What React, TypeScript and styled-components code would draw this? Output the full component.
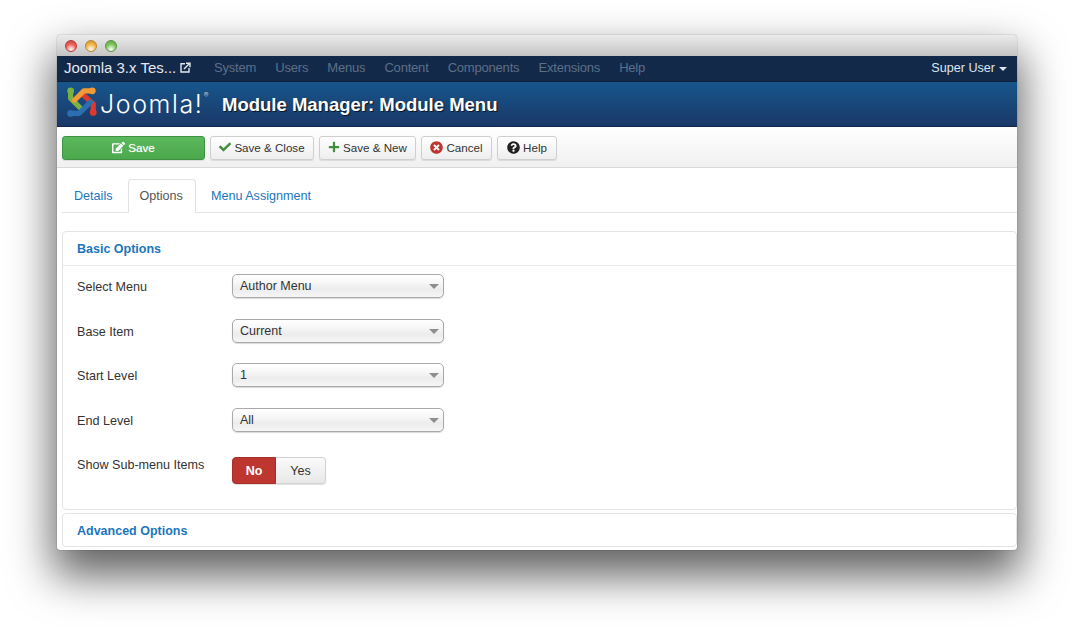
import React from 'react';
import styled, { createGlobalStyle } from 'styled-components';
import { FaCheck, FaPlus, FaTimesCircle, FaQuestionCircle, FaEdit } from 'react-icons/fa';

const GlobalStyle = createGlobalStyle`
  html, body {
    margin: 0;
    padding: 0;
    background: #fff;
    font-family: "Liberation Sans", Arial, sans-serif;
    overflow: hidden;
  }
  * { box-sizing: border-box; }
`;

const Page = styled.div`
  width: 1074px;
  height: 629px;
  padding: 35px 57px 0;
`;

const Window = styled.div`
  width: 960px;
  height: 515px;
  background: #fff;
  border-radius: 4px 4px 3px 3px;
  overflow: hidden;
  box-shadow: 0 0 1px 0 rgba(0, 0, 0, 0.7);
`;

const Shadowed = styled.div`
  border-radius: 4px;
  box-shadow: 0 22px 44px 4px rgba(0, 0, 0, 0.62);
`;

const TitleBar = styled.div`
  height: 21px;
  display: flex;
  align-items: center;
  gap: 8px;
  padding-left: 8px;
  background: linear-gradient(#ebebeb, #c4c4c4);
`;

const Light = styled.span<{ $color: string; $edge: string }>`
  width: 12px;
  height: 12px;
  border-radius: 50%;
  border: 1px solid ${(p) => p.$edge};
  background: radial-gradient(circle at 50% 85%, #fff 0, ${(p) => p.$color} 55%, ${(p) => p.$edge} 110%);
`;

const NavBar = styled.div`
  height: 26px;
  display: flex;
  align-items: center;
  padding: 0 10px 3px 7px;
  background: #13294a;
  border-bottom: 1px solid #0f2340;
`;

const Brand = styled.span`
  display: flex;
  align-items: center;
  gap: 4px;
  width: 150px;
  font-size: 15px;
  color: #e4e8ee;
`;

const NavLink = styled.span`
  font-size: 13px;
  color: #5d6f87;
  margin-right: 19.1px;
  letter-spacing: -0.2px;
`;

const UserMenu = styled.span`
  margin-left: auto;
  display: flex;
  align-items: center;
  gap: 4px;
  padding-top: 1px;
  font-size: 12.6px;
  color: #dfe5ec;
`;

const Caret = styled.span`
  width: 0;
  height: 0;
  border-left: 4px solid transparent;
  border-right: 4px solid transparent;
  border-top: 4px solid #dfe5ec;
  margin-top: 2px;
`;

const Header = styled.div`
  height: 45px;
  display: flex;
  align-items: center;
  padding-left: 8px;
  background: linear-gradient(#17568c, #1a3867);
  border-bottom: 1px solid #0f2a50;
`;

const LogoWrap = styled.div`
  display: flex;
  align-items: center;
  width: 157px;
  flex: none;
`;

const LogoWord = styled.span`
  font-family: "Inter", sans-serif;
  font-weight: 300;
  font-size: 25px;
  letter-spacing: 1.6px;
  color: #fff;
  margin-left: 3px;
  position: relative;
`;

const Reg = styled.sup`
  font-size: 7px;
  color: #c9d3df;
  position: absolute;
  top: 3px;
  right: -5px;
  line-height: 1;
  letter-spacing: 0;
`;

const PageTitle = styled.h1`
  margin: 0;
  padding-top: 2px;
  font-size: 18.5px;
  font-weight: bold;
  color: #fff;
  text-shadow: 1px 1px 1px rgba(0, 0, 0, 0.7);
`;

const Toolbar = styled.div`
  height: 41px;
  display: flex;
  align-items: flex-start;
  gap: 5px;
  padding: 9px 0 0 5px;
  background: linear-gradient(#fff, #f0f0f0);
  border-bottom: 1px solid #d8d8d8;
`;

const ToolButton = styled.button<{ $width: number; $primary?: boolean }>`
  width: ${(p) => p.$width}px;
  height: 24px;
  display: flex;
  align-items: center;
  justify-content: center;
  gap: 3px;
  padding: 0 0 2px;
  font: 11.6px "Liberation Sans", Arial, sans-serif;
  border-radius: 3px;
  color: ${(p) => (p.$primary ? '#fff' : '#333')};
  text-shadow: ${(p) => (p.$primary ? '0 0 1px rgba(255, 255, 255, 0.6)' : 'none')};
  border: 1px solid ${(p) => (p.$primary ? '#3f9143' : '#cfcfcf')};
  background: ${(p) => (p.$primary ? 'linear-gradient(#5cb85c, #4ca84c)' : 'linear-gradient(#fff, #eee)')};
  box-shadow: 0 1px 1px rgba(0, 0, 0, 0.1);
`;

const TabStrip = styled.div`
  margin: 11px 0 0 5px;
  height: 34px;
  display: flex;
  border-bottom: 1px solid #e2e2e2;
`;

const Tab = styled.div<{ $active?: boolean }>`
  height: 34px;
  padding: ${(p) => (p.$active ? '0 12px 0 11px' : '0 12px')};
  margin-right: 2px;
  line-height: 32px;
  font-size: 12.6px;
  color: ${(p) => (p.$active ? '#555' : '#1b76bc')};
  background: ${(p) => (p.$active ? '#fff' : 'transparent')};
  border: 1px solid ${(p) => (p.$active ? '#e2e2e2' : 'transparent')};
  border-bottom-color: ${(p) => (p.$active ? '#fff' : 'transparent')};
  border-radius: 4px 4px 0 0;

  &:first-child {
    margin-left: -1px;
  }
`;

const Panel = styled.div<{ $height: number; $top: number }>`
  margin: ${(p) => p.$top}px 0 0 5px;
  height: ${(p) => p.$height}px;
  border: 1px solid #e4e4e4;
  border-radius: 4px;
`;

const PanelHeading = styled.div<{ $ruled?: boolean }>`
  height: ${(p) => (p.$ruled ? 34 : 32)}px;
  padding-left: 14px;
  line-height: 35px;
  font-size: 12.5px;
  font-weight: bold;
  color: #1b76bc;
  border-bottom: ${(p) => (p.$ruled ? '1px solid #e8e8e8' : 'none')};
`;

const Form = styled.div`
  padding: 8px 0 0 14px;
`;

const Row = styled.div`
  display: flex;
  height: 24px;
  margin-bottom: 20.5px;
`;

const Label = styled.label`
  width: 155px;
  flex: none;
  font-size: 12.6px;
  line-height: 26px;
  color: #333;
`;

const Select = styled.div`
  width: 212px;
  height: 24px;
  display: flex;
  align-items: center;
  justify-content: space-between;
  padding: 0 4px 0 7px;
  font-size: 12.5px;
  color: #333;
  border: 1px solid #a9a9a9;
  border-radius: 5px;
  background: linear-gradient(#fff, #f7f7f7 35%, #ececec 65%, #f6f6f6);
  box-shadow: 0 1px 1px rgba(0, 0, 0, 0.15);
`;

const SelectCaret = styled.span`
  width: 0;
  height: 0;
  border-left: 5px solid transparent;
  border-right: 5px solid transparent;
  border-top: 5px solid #8e8e8e;
  margin-top: 1px;
`;

const Toggle = styled.div`
  display: flex;
  flex: none;
  margin-top: 5px;
  height: 27px;
`;

const ToggleButton = styled.div<{ $on?: boolean }>`
  width: ${(p) => (p.$on ? 44 : 50)}px;
  display: flex;
  align-items: center;
  justify-content: center;
  font-size: 12.5px;
  font-weight: ${(p) => (p.$on ? 'bold' : 'normal')};
  color: ${(p) => (p.$on ? '#fff' : '#333')};
  background: ${(p) => (p.$on ? '#bd362f' : 'linear-gradient(#fafafa, #e8e8e8)')};
  border: 1px solid ${(p) => (p.$on ? '#a52f29' : '#d2d2d2')};
  border-left-width: ${(p) => (p.$on ? 1 : 0)}px;
  border-radius: ${(p) => (p.$on ? '4px 0 0 4px' : '0 4px 4px 0')};
  box-shadow: 0 1px 1px rgba(0, 0, 0, 0.12);
`;

const ExternalIcon = () => (
  <svg width="11" height="11" viewBox="0 0 11 11" fill="none" stroke="#e4e8ee" strokeWidth="1.4">
    <path d="M5 1.800H1v8.200h8V6" />
    <path d="M4 7l5-5M6 1.200h4v4" />
  </svg>
);

const JoomlaMark = () => (
  <svg width="32" height="34" viewBox="0 2 34 36" fill="none" strokeLinecap="round" strokeLinejoin="round">
    <path d="M6 6V14L16 24" stroke="#7ab241" strokeWidth="5.500" />
    <circle cx="6" cy="6" r="3.600" fill="#7ab241" />
    <path d="M30 29V20L19 10" stroke="#e1382e" strokeWidth="5.500" />
    <circle cx="30" cy="29" r="3.600" fill="#e1382e" />
    <path d="M6 30H15L27 18" stroke="#2c6fb0" strokeWidth="5.500" />
    <circle cx="6" cy="30" r="3.600" fill="#2c6fb0" />
    <path d="M29 6H20L10 16" stroke="#f39a34" strokeWidth="5.500" />
    <circle cx="29" cy="6" r="3.600" fill="#f39a34" />
  </svg>
);

const navItems = ['System', 'Users', 'Menus', 'Content', 'Components', 'Extensions', 'Help'];

const selects = [
  { label: 'Select Menu', value: 'Author Menu' },
  { label: 'Base Item', value: 'Current' },
  { label: 'Start Level', value: '1' },
  { label: 'End Level', value: 'All' },
];

export default function App() {
  return (
    <Page>
      <GlobalStyle />
      <Shadowed>
        <Window>
          <TitleBar>
            <Light $color="#f0605a" $edge="#b23a36" />
            <Light $color="#f2b445" $edge="#b8862f" />
            <Light $color="#7ac558" $edge="#5b9440" />
          </TitleBar>
          <NavBar>
            <Brand>
              Joomla 3.x Tes...
              <ExternalIcon />
            </Brand>
            {navItems.map((item) => (
              <NavLink key={item}>{item}</NavLink>
            ))}
            <UserMenu>
              Super User
              <Caret />
            </UserMenu>
          </NavBar>
          <Header>
            <LogoWrap>
              <JoomlaMark />
              <LogoWord>
                Joomla!<Reg>®</Reg>
              </LogoWord>
            </LogoWrap>
            <PageTitle>Module Manager: Module Menu</PageTitle>
          </Header>
          <Toolbar>
            <ToolButton $width={143} $primary>
              <FaEdit size={13} color="#fff" /> Save
            </ToolButton>
            <ToolButton $width={104}>
              <FaCheck size={12} color="#3f8f3f" /> Save &amp; Close
            </ToolButton>
            <ToolButton $width={97}>
              <FaPlus size={12} color="#3f8f3f" /> Save &amp; New
            </ToolButton>
            <ToolButton $width={71}>
              <FaTimesCircle size={13} color="#bd362f" /> Cancel
            </ToolButton>
            <ToolButton $width={60}>
              <FaQuestionCircle size={13} color="#222" /> Help
            </ToolButton>
          </Toolbar>
          <TabStrip>
            <Tab>Details</Tab>
            <Tab $active>Options</Tab>
            <Tab>Menu Assignment</Tab>
          </TabStrip>
          <Panel $top={18} $height={279}>
            <PanelHeading $ruled>Basic Options</PanelHeading>
            <Form>
              {selects.map((s) => (
                <Row key={s.label}>
                  <Label>{s.label}</Label>
                  <Select>
                    {s.value}
                    <SelectCaret />
                  </Select>
                </Row>
              ))}
              <Row>
                <Label>Show Sub-menu Items</Label>
                <Toggle>
                  <ToggleButton $on>No</ToggleButton>
                  <ToggleButton>Yes</ToggleButton>
                </Toggle>
              </Row>
            </Form>
          </Panel>
          <Panel $top={3} $height={34}>
            <PanelHeading>Advanced Options</PanelHeading>
          </Panel>
        </Window>
      </Shadowed>
    </Page>
  );
}
